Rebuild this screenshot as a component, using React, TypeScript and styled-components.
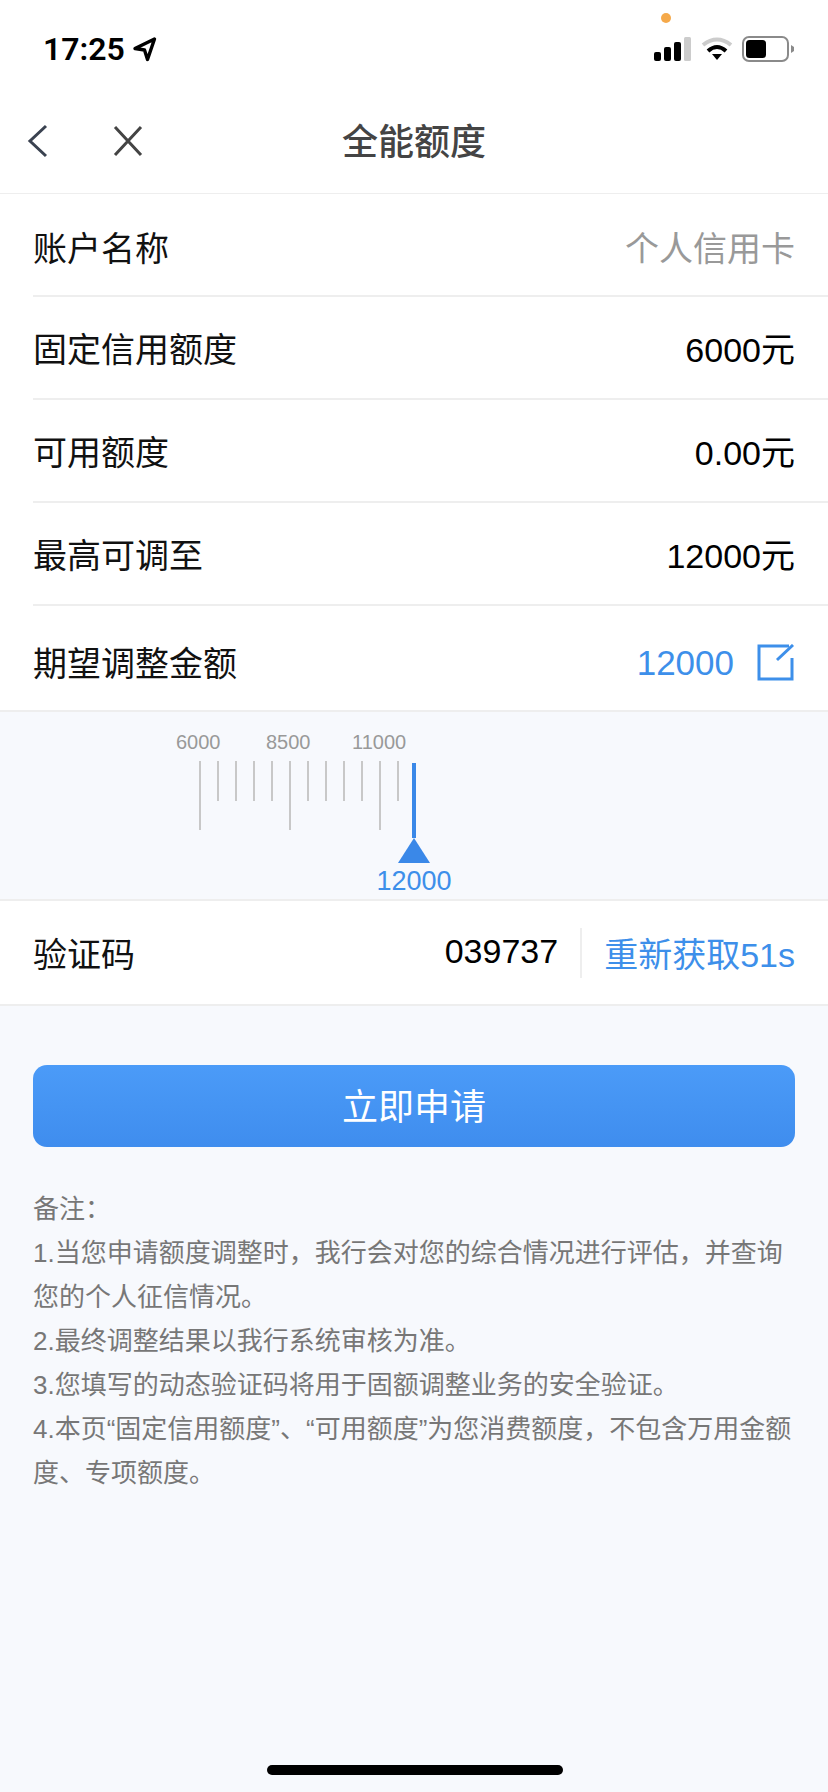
import styled, { createGlobalStyle } from "styled-components";

const GlobalStyle = createGlobalStyle`
  html, body {
    margin: 0;
    padding: 0;
    background: #f7f9fd;
  }
  * {
    box-sizing: border-box;
  }
`;

const fontStack = `"Liberation Sans", "Noto Sans CJK SC", sans-serif`;

const rows = [
  { label: "账户名称", value: "个人信用卡", muted: true },
  { label: "固定信用额度", value: "6000元" },
  { label: "可用额度", value: "0.00元" },
  { label: "最高可调至", value: "12000元" },
];

const notes = [
  "备注：",
  "1.当您申请额度调整时，我行会对您的综合情况进行评估，并查询您的个人征信情况。",
  "2.最终调整结果以我行系统审核为准。",
  "3.您填写的动态验证码将用于固额调整业务的安全验证。",
  "4.本页“固定信用额度”、“可用额度”为您消费额度，不包含万用金额度、专项额度。",
];

const ticks = Array.from({ length: 12 }, (_, i) => i);

export default function App(): JSX.Element {
  return (
    <Page>
      <GlobalStyle />
      <StatusBar>
        <Clock>
          17:25
          <svg width="25" height="26" viewBox="0 0 25 26">
            <path
              d="M22.5 3 L3 12.5 L12.5 14 L15.5 23.5 Z"
              fill="none"
              stroke="#000"
              strokeWidth="3.4"
              strokeLinejoin="round"
            />
          </svg>
        </Clock>
        <PrivacyDot />
        <StatusIcons>
          <svg width="38" height="24" viewBox="0 0 38 24">
            <rect x="0" y="15" width="7" height="9" rx="2" fill="#000" />
            <rect x="10" y="10" width="7" height="14" rx="2" fill="#000" />
            <rect x="20" y="5" width="7" height="19" rx="2" fill="#000" />
            <rect x="30" y="0" width="7" height="24" rx="1.5" fill="#ccc" />
          </svg>
          <svg width="32" height="24" viewBox="0 0 32 24">
            <path d="M2 8 Q16 -3 30 8" fill="none" stroke="#ccc" strokeWidth="4" />
            <path d="M7 14 Q16 6 25 14" fill="none" stroke="#000" strokeWidth="4" />
            <path d="M11 17 L21 17 L16 23 Z" fill="#000" />
          </svg>
          <svg width="54" height="26" viewBox="0 0 54 26">
            <rect x="1" y="1" width="45" height="24" rx="6" fill="none" stroke="#8a8a8a" strokeWidth="2" />
            <rect x="4" y="4" width="20" height="18" rx="3.5" fill="#000" />
            <path d="M49 9 L52 11 L52 15 L49 17 Z" fill="#8a8a8a" />
          </svg>
        </StatusIcons>
      </StatusBar>

      <NavBar>
        <NavButtons>
          <svg width="24" height="34" viewBox="0 0 24 34">
            <path d="M21 2 L5 17 L21 32" fill="none" stroke="#3a4250" strokeWidth="3" />
          </svg>
          <svg width="32" height="34" viewBox="0 0 32 34">
            <path d="M3 3 L29 31 M29 3 L3 31" fill="none" stroke="#444" strokeWidth="3" />
          </svg>
        </NavButtons>
        <NavTitle>全能额度</NavTitle>
      </NavBar>

      <Section>
        {rows.map((row, i) => (
          <Row key={row.label} $first={i === 0}>
            <RowLabel>{row.label}</RowLabel>
            <RowValue $muted={row.muted}>{row.value}</RowValue>
          </Row>
        ))}
        <LastRow>
          <RowLabel>期望调整金额</RowLabel>
          <EditValue>
            <span>12000</span>
            <svg width="38" height="38" viewBox="0 0 38 38">
              <path
                d="M32 2 L2 2 L2 35 L35 35 L35 14"
                fill="none"
                stroke="#3d8fea"
                strokeWidth="3"
              />
              <path d="M20 16 L36 1" fill="none" stroke="#3d8fea" strokeWidth="3" />
            </svg>
          </EditValue>
        </LastRow>
      </Section>

      <RulerPanel>
        <RulerLabels>
          <RulerLabel>6000</RulerLabel>
          <RulerLabel>8500</RulerLabel>
          <RulerLabel $shift={-4}>11000</RulerLabel>
        </RulerLabels>
        <Ticks>
          {ticks.map((i) => (
            <Tick key={i} $long={i % 5 === 0} />
          ))}
          <Pointer>
            <PointerLine />
            <PointerHead />
          </Pointer>
        </Ticks>
        <RulerValue>12000</RulerValue>
      </RulerPanel>

      <CodeRow>
        <RowLabel>验证码</RowLabel>
        <CodeRight>
          <CodeValue>039737</CodeValue>
          <Resend>重新获取51s</Resend>
        </CodeRight>
      </CodeRow>

      <ApplyButton>立即申请</ApplyButton>

      <Notes>
        {notes.map((note) => (
          <p key={note}>{note}</p>
        ))}
      </Notes>

      <HomeIndicator />
    </Page>
  );
}

const Page = styled.div`
  position: relative;
  width: 828px;
  height: 1792px;
  overflow: hidden;
  background: #f7f9fd;
  font-family: ${fontStack};
  color: #000;
`;

const StatusBar = styled.div`
  position: relative;
  height: 88px;
  background: #fff;
  display: flex;
  align-items: flex-start;
  justify-content: space-between;
  padding: 32px 32px 0 43px;
`;

const Clock = styled.div`
  display: flex;
  align-items: center;
  gap: 7px;
  font-family: Roboto, sans-serif;
  font-size: 32px;
  font-weight: 600;
  line-height: 34px;
`;

const PrivacyDot = styled.span`
  position: absolute;
  top: 13px;
  left: 661px;
  width: 10px;
  height: 10px;
  border-radius: 50%;
  background: #f5a94a;
`;

const StatusIcons = styled.div`
  display: flex;
  align-items: center;
  gap: 9px;
  margin-top: 4px;
`;

const NavBar = styled.div`
  position: relative;
  height: 106px;
  background: #fff;
  border-bottom: 1px solid #eeeeee;
  display: flex;
  align-items: center;
  justify-content: center;
`;

const NavButtons = styled.div`
  position: absolute;
  left: 25px;
  top: 36px;
  display: flex;
  gap: 63px;
`;

const NavTitle = styled.div`
  font-size: 36px;
  font-weight: 500;
  color: #444;
  margin-top: -3px;
`;

const Section = styled.div`
  background: #fff;
  padding-left: 33px;
`;

const Row = styled.div<{ $first?: boolean }>`
  height: 103px;
  padding-right: 33px;
  padding-top: ${(p) => (p.$first ? 4 : 0)}px;
  display: flex;
  align-items: center;
  justify-content: space-between;
  border-bottom: 2px solid #eeeeee;
`;

const LastRow = styled(Row)`
  height: 104px;
  padding-top: 6px;
  border-bottom: none;
`;

const RowLabel = styled.div`
  font-size: 34px;
  color: #111;
`;

const RowValue = styled.div<{ $muted?: boolean }>`
  font-size: 34px;
  color: ${(p) => (p.$muted ? "#999" : "#000")};
`;

const EditValue = styled.div`
  display: flex;
  align-items: center;
  gap: 23px;
  padding-top: 4px;
  font-size: 35px;
  color: #3d8fea;
`;

const RulerPanel = styled.div`
  height: 191px;
  padding-left: 199px;
  border-top: 2px solid #eeeeee;
  border-bottom: 2px solid #eeeeee;
  background: #f7f9fd;
`;

const RulerLabels = styled.div`
  height: 49px;
  padding-top: 18px;
  display: flex;
`;

const RulerLabel = styled.span<{ $shift?: number }>`
  width: 90px;
  margin-left: ${(p) => -23 + (p.$shift ?? 0)}px;
  margin-right: 23px;
  font-size: 20px;
  line-height: 24px;
  color: #999;
`;

const Ticks = styled.div`
  position: relative;
  height: 79px;
  display: flex;
  align-items: flex-start;
  gap: 16px;
`;

const Tick = styled.span<{ $long: boolean }>`
  width: 2px;
  height: ${(p) => (p.$long ? 69 : 40)}px;
  background: #c8c8c8;
`;

const Pointer = styled.div`
  position: absolute;
  left: 199px;
  top: 2px;
  width: 32px;
  display: flex;
  flex-direction: column;
  align-items: center;
`;

const PointerLine = styled.span`
  width: 4px;
  height: 75px;
  background: #3a88e8;
`;

const PointerHead = styled.span`
  width: 0;
  height: 0;
  border-left: 16px solid transparent;
  border-right: 16px solid transparent;
  border-bottom: 25px solid #3a88e8;
`;

const RulerValue = styled.div`
  width: 120px;
  margin: 26px 0 0 155px;
  text-align: center;
  font-size: 27px;
  line-height: 30px;
  color: #3d8fea;
`;

const CodeRow = styled.div`
  height: 105px;
  padding: 0 33px;
  background: #fff;
  border-bottom: 2px solid #eeeeee;
  display: flex;
  align-items: center;
  justify-content: space-between;
`;

const CodeRight = styled.div`
  display: flex;
  align-items: center;
`;

const CodeValue = styled.div`
  font-size: 34px;
  padding-right: 22px;
  margin-top: -3px;
`;

const Resend = styled.div`
  height: 50px;
  padding-left: 22px;
  border-left: 2px solid #eeeeee;
  display: flex;
  align-items: center;
  font-size: 34px;
  color: #3d8fea;
`;

const ApplyButton = styled.div`
  height: 82px;
  margin: 59px 33px 0;
  padding-bottom: 4px;
  border-radius: 14px;
  background: linear-gradient(180deg, #4b9bf8 0%, #3f8dee 100%);
  color: #fff;
  font-size: 36px;
  display: flex;
  align-items: center;
  justify-content: center;
`;

const Notes = styled.div`
  margin: 40px 33px 0 33px;
  font-size: 26px;
  line-height: 44px;
  color: #777;

  p {
    margin: 0;
  }
`;

const HomeIndicator = styled.div`
  position: absolute;
  left: 267px;
  bottom: 17px;
  width: 296px;
  height: 10px;
  border-radius: 5px;
  background: #000;
`;
